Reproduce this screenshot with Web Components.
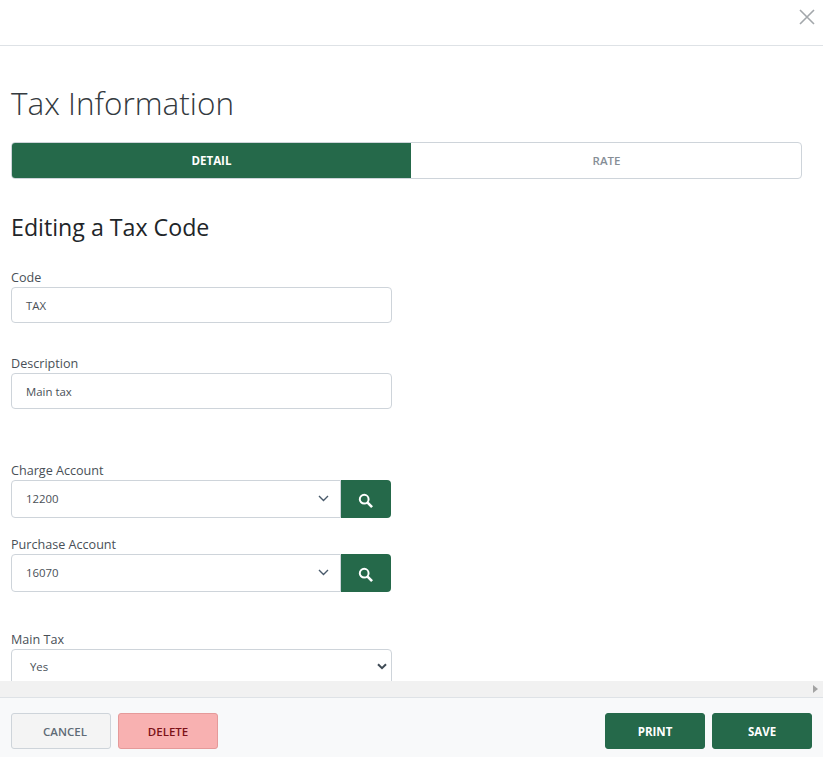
<!DOCTYPE html>
<html><head><meta charset="utf-8"><style>
html,body{margin:0;padding:0;height:757px;overflow:hidden;background:#fff}
body{font-family:"Open Sans","Noto Sans",sans-serif;color:#212529}
</style></head><body>
<template id="t-modal"><style>
:host{display:flex;flex-direction:column;height:757px;overflow:hidden;background:#fff}
header{flex:none;height:45px;border-bottom:1px solid #dee2e6;display:flex;justify-content:flex-end;align-items:flex-start;padding-right:8px;box-sizing:content-box}
header svg{margin-top:9px;display:block}
main{flex:1;min-height:0;overflow:hidden;padding:0 21px 0 11px}
.hbar{flex:none;height:16px;background:#f1f1f1;display:flex;justify-content:flex-end;align-items:center;padding-right:5px}
footer{flex:none;height:60px;box-sizing:border-box;border-top:1px solid #dee2e6;background:#f8f9fa;display:flex;justify-content:space-between;padding:15px 11px 0}
footer div{display:flex;gap:7px}
</style>
<header><svg width="16" height="16" viewBox="0 0 16 16"><path d="M1 1L15 15M15 1L1 15" stroke="#a3a7ab" stroke-width="1.6" fill="none"/></svg></header>
<main><slot></slot></main>
<div class="hbar"><svg width="5" height="8" viewBox="0 0 5 8"><path d="M0 0L5 4L0 8Z" fill="#a3a3a3"/></svg></div>
<footer><div><slot name="left"></slot></div><div><slot name="right"></slot></div></footer>
</template>

<template id="t-tabs"><style>
:host{display:flex;height:37px;box-sizing:border-box;border:1px solid #ced4da;border-radius:4px;overflow:hidden;margin-top:19px}
span{flex:1;display:flex;align-items:center;justify-content:center;font-size:11.5px;font-weight:600;color:#868e96;padding-left:1px}
span.a{flex:none;width:399px;box-sizing:border-box;background:#25694a;color:#fff;font-weight:700;padding-left:0}
</style><span class="a"><slot name="a"></slot></span><span><slot name="b"></slot></span></template>

<template id="t-field"><style>
:host{display:block}
label{display:block;font-size:12.6px;line-height:18px;color:#495057}
.row{display:flex;width:381px}
.box{flex:1;height:36px;box-sizing:border-box;border:1px solid #ced4da;border-radius:4px;background:#fff;display:flex;align-items:center;padding:0 14px;font-size:11.4px;color:#495057}
:host([kind=combo]) .row{width:380px}
:host([kind=combo]) .box{height:38px;border-radius:4px 0 0 4px;padding:0 11px 2px 14px;justify-content:space-between}
:host([kind=native]) .box{padding:0 4px 2px 18px;justify-content:space-between}
button{width:50px;height:38px;padding:3px 1px 0 0;box-sizing:border-box;border:0;background:#25694a;border-radius:0 4px 4px 0;display:none;align-items:center;justify-content:center}
:host([kind=combo]) button{display:flex}
.c{display:none}
:host([kind=combo]) .c.soft,:host([kind=native]) .c.hard{display:block}
</style>
<label><slot name="label"></slot></label>
<div class="row"><div class="box"><span><slot></slot></span>
<svg class="c soft" width="11" height="7" viewBox="0 0 11 7"><path d="M1 1L5.5 5.5L10 1" stroke="#495a6b" stroke-width="1.4" fill="none"/></svg>
<svg class="c hard" width="10" height="7" viewBox="0 0 10 7"><path d="M1 1.2L5 5.2L9 1.2" stroke="#3f4a55" stroke-width="2" fill="none"/></svg>
</div><button aria-label="search"><svg width="15" height="15" viewBox="0 0 16 16"><circle cx="6.6" cy="6.6" r="4.7" stroke="#fff" stroke-width="2.1" fill="none"/><path d="M10.2 10.2L15 15" stroke="#fff" stroke-width="2.8" fill="none"/></svg></button></div>
</template>

<template id="t-btn"><style>
:host{display:flex;align-items:center;justify-content:center;width:100px;height:36px;box-sizing:border-box;border-radius:3px;font-size:11.5px;font-weight:600;border:1px solid #25694a;background:#25694a;color:#fff}
:host([v=cancel]){background:#f4f4f4;border-color:#ced4da;color:#5f6b76;padding-left:8px}
:host([v=delete]){background:#f8b1b1;border-color:#e59a9a;color:#7c1218}
:host([v=primary]){font-weight:700}
</style><slot></slot></template>

<tax-modal>
  <page-title>Tax Information</page-title>
  <tax-tabs><span slot="a">DETAIL</span><span slot="b">RATE</span></tax-tabs>
  <sub-title>Editing a Tax Code</sub-title>
  <tax-field style="margin-top:28px"><span slot="label">Code</span>TAX</tax-field>
  <tax-field style="margin-top:32px"><span slot="label">Description</span>Main tax</tax-field>
  <tax-field kind="combo" style="margin-top:53px"><span slot="label">Charge Account</span>12200</tax-field>
  <tax-field kind="combo" style="margin-top:18px"><span slot="label">Purchase Account</span>16070</tax-field>
  <tax-field kind="native" style="margin-top:39px"><span slot="label">Main Tax</span>Yes</tax-field>
  <tax-btn slot="left" v="cancel">CANCEL</tax-btn>
  <tax-btn slot="left" v="delete">DELETE</tax-btn>
  <tax-btn slot="right" v="primary">PRINT</tax-btn>
  <tax-btn slot="right" v="primary">SAVE</tax-btn>
</tax-modal>
<script>
function def(name,id){customElements.define(name,class extends HTMLElement{constructor(){super();this.attachShadow({mode:'open'}).appendChild(document.getElementById(id).content.cloneNode(true))}})}
def('tax-modal','t-modal');def('tax-tabs','t-tabs');def('tax-field','t-field');def('tax-btn','t-btn');
function txt(name,css){customElements.define(name,class extends HTMLElement{constructor(){super();this.attachShadow({mode:'open'}).innerHTML='<style>:host{'+css+'}</style><slot></slot>'}})}
txt('page-title','display:block;font-size:31.5px;font-weight:300;line-height:40px;color:#343a40;margin-top:37px');
txt('sub-title','display:block;font-size:23.2px;font-weight:400;line-height:28px;color:#212529;margin-top:34px');
</script>
</body></html>
